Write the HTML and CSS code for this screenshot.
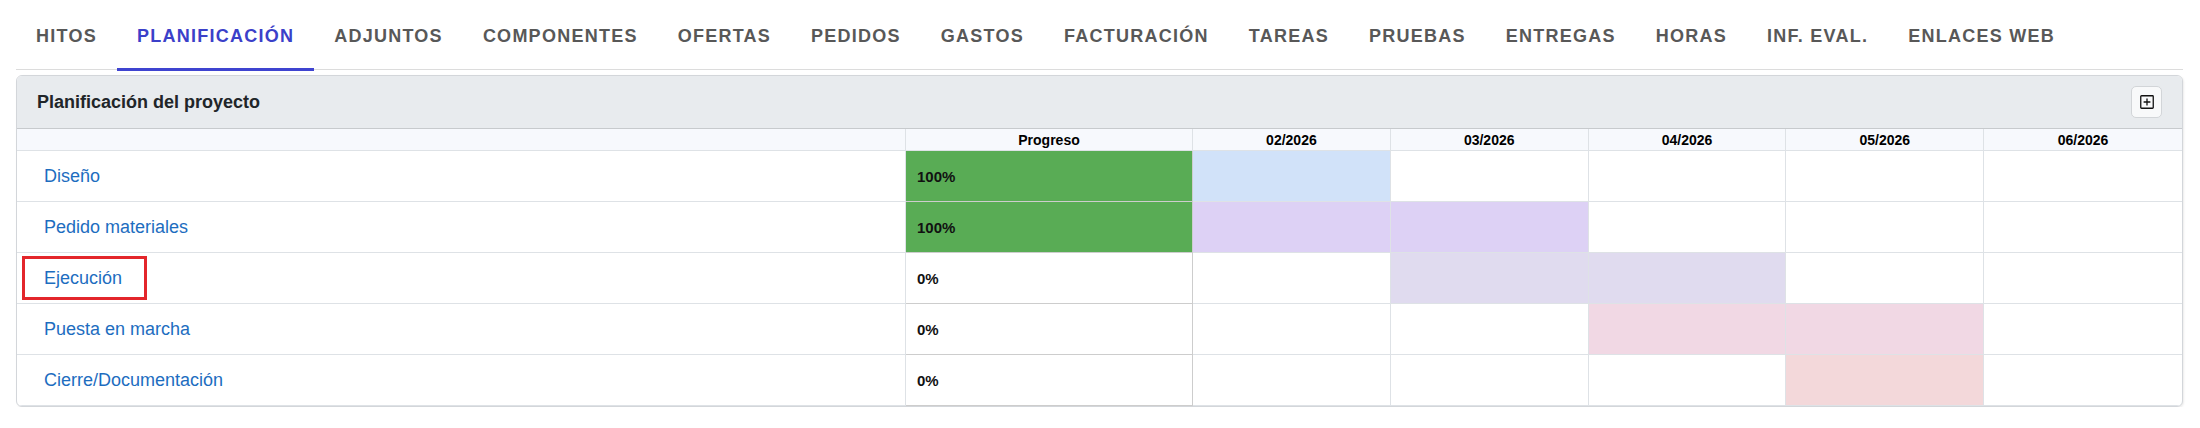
FILE: index.html
```html
<!DOCTYPE html>
<html lang="es">
<head>
<meta charset="utf-8">
<title>Planificación del proyecto</title>
<link rel="stylesheet" href="styles.css">
</head>
<body>
<div class="page">
  <nav class="tabs">
    <a class="tab">HITOS</a>
    <a class="tab active">PLANIFICACIÓN</a>
    <a class="tab">ADJUNTOS</a>
    <a class="tab">COMPONENTES</a>
    <a class="tab">OFERTAS</a>
    <a class="tab">PEDIDOS</a>
    <a class="tab">GASTOS</a>
    <a class="tab">FACTURACIÓN</a>
    <a class="tab">TAREAS</a>
    <a class="tab">PRUEBAS</a>
    <a class="tab">ENTREGAS</a>
    <a class="tab">HORAS</a>
    <a class="tab">INF. EVAL.</a>
    <a class="tab">ENLACES WEB</a>
  </nav>

  <section class="panel">
    <header class="panel-head">
      <h2 class="panel-title">Planificación del proyecto</h2>
      <button class="icon-btn" type="button" aria-label="Expandir">
        <svg width="14" height="14" viewBox="0 0 14 14" aria-hidden="true">
          <rect x="0.75" y="0.75" width="12.5" height="12.5" rx="0.8" fill="none" stroke="#111" stroke-width="1.3"/>
          <path d="M7 3.6v6.8M3.6 7h6.8" stroke="#111" stroke-width="1.3" fill="none"/>
        </svg>
      </button>
    </header>

    <div class="gantt">
      <div class="row head">
        <div class="cell name"></div>
        <div class="cell prog">Progreso</div>
        <div class="cell month">02/2026</div>
        <div class="cell month">03/2026</div>
        <div class="cell month">04/2026</div>
        <div class="cell month">05/2026</div>
        <div class="cell month last">06/2026</div>
      </div>

      <div class="row">
        <div class="cell name"><a class="task">Diseño</a></div>
        <div class="cell prog" style="--p:100%">100%</div>
        <div class="cell month c-blue"></div>
        <div class="cell month"></div>
        <div class="cell month"></div>
        <div class="cell month"></div>
        <div class="cell month last"></div>
      </div>

      <div class="row">
        <div class="cell name"><a class="task">Pedido materiales</a></div>
        <div class="cell prog" style="--p:100%">100%</div>
        <div class="cell month c-lilac"></div>
        <div class="cell month c-lilac"></div>
        <div class="cell month"></div>
        <div class="cell month"></div>
        <div class="cell month last"></div>
      </div>

      <div class="row">
        <div class="cell name"><a class="task marked">Ejecución</a></div>
        <div class="cell prog" style="--p:0%">0%</div>
        <div class="cell month"></div>
        <div class="cell month c-grey"></div>
        <div class="cell month c-grey"></div>
        <div class="cell month"></div>
        <div class="cell month last"></div>
      </div>

      <div class="row">
        <div class="cell name"><a class="task">Puesta en marcha</a></div>
        <div class="cell prog" style="--p:0%">0%</div>
        <div class="cell month"></div>
        <div class="cell month"></div>
        <div class="cell month c-pink"></div>
        <div class="cell month c-pink"></div>
        <div class="cell month last"></div>
      </div>

      <div class="row">
        <div class="cell name"><a class="task">Cierre/Documentación</a></div>
        <div class="cell prog" style="--p:0%">0%</div>
        <div class="cell month"></div>
        <div class="cell month"></div>
        <div class="cell month"></div>
        <div class="cell month c-rose"></div>
        <div class="cell month last"></div>
      </div>
    </div>
  </section>
</div>
</body>
</html>
```

FILE: styles.css
```css
* { box-sizing: border-box; }

html, body {
  margin: 0;
  background: #ffffff;
  font-family: "Liberation Sans", Arial, sans-serif;
  color: #212529;
}

.page {
  padding: 0 17px 0 16px;
}

/* Tabs */
.tabs {
  display: flex;
  border-bottom: 1px solid #dcdcdc;
}

.tab {
  display: block;
  padding: 26px 20px 21px;
  margin-bottom: -2px;
  border-bottom: 3px solid transparent;
  font-size: 18px;
  line-height: 21px;
  font-weight: bold;
  letter-spacing: 1.25px;
  color: #585858;
  text-decoration: none;
  white-space: nowrap;
}

.tab.active {
  color: #3b40c9;
  border-bottom-color: #3f44d0;
}

/* Panel */
.panel {
  margin-top: 5px;
  border: 1px solid #d3d6da;
  border-radius: 6px;
  overflow: hidden;
  box-shadow: 1px 1px 2px rgba(0, 0, 0, 0.08);
  background: #fff;
}

.panel-head {
  display: flex;
  align-items: center;
  justify-content: space-between;
  height: 53px;
  padding: 0 20px;
  background: #e8ebee;
  border-bottom: 1px solid #c7cacd;
}

.panel-title {
  margin: 0;
  font-size: 18px;
  font-weight: bold;
  color: #212529;
}

.icon-btn {
  display: flex;
  align-items: center;
  justify-content: center;
  width: 31px;
  height: 32px;
  padding: 0;
  border: 1px solid #d2d5d8;
  border-radius: 5px;
  background: #f8f9fa;
}

/* Gantt grid */
.row {
  display: grid;
  grid-template-columns: 889px 287px repeat(5, 1fr);
  height: 51px;
}

.row.head {
  height: 22px;
  background: #f7f9fd;
}

.cell {
  border-right: 1px solid #dee2e6;
  border-bottom: 1px solid #dee2e6;
}

.cell.last {
  border-right: none;
}

.head .cell {
  display: flex;
  align-items: center;
  justify-content: center;
  font-size: 14px;
  font-weight: bold;
  color: #000;
}

.name {
  display: flex;
  align-items: center;
  padding-left: 5px;
}

.task {
  display: inline-flex;
  align-items: center;
  height: 44px;
  padding: 0 22px 0 19px;
  border: 3px solid transparent;
  font-size: 18px;
  color: #1d6dbf;
  text-decoration: none;
  white-space: nowrap;
}

.task.marked {
  border-color: #e3262b;
}

.row:not(.head) .prog {
  display: flex;
  align-items: center;
  padding-left: 11px;
  font-size: 15px;
  font-weight: bold;
  color: #111;
  border-right-color: #cdcdcd;
  border-bottom-color: #cdcdcd;
  background: linear-gradient(to right, #59ac55 var(--p), transparent var(--p));
}

.c-blue  { background: #d1e2f9; }
.c-lilac { background: #ddd1f5; }
.c-grey  { background: #e0dbef; }
.c-pink  { background: #f1d8e4; }
.c-rose  { background: #f3d8da; }
```
